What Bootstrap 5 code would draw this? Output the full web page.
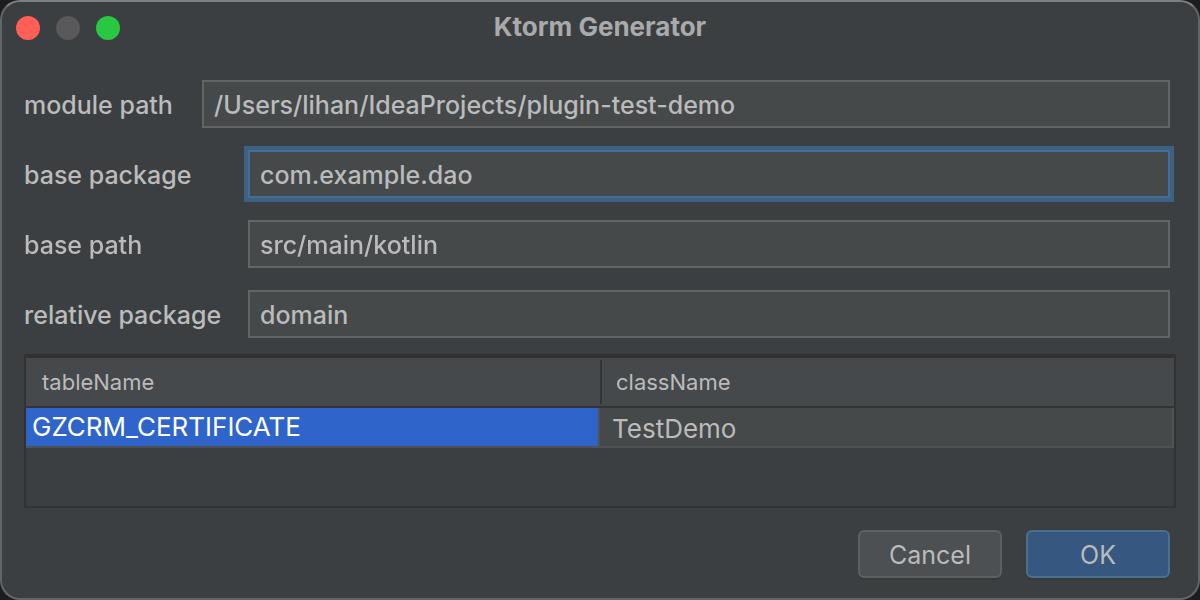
<!DOCTYPE html>
<html lang="en" data-bs-theme="dark">
<head>
<meta charset="utf-8">
<meta name="viewport" content="width=device-width, initial-scale=1">
<title>Ktorm Generator</title>
<link rel="stylesheet" href="https://cdn.jsdelivr.net/npm/bootstrap@5.3.0/dist/css/bootstrap.min.css">
<style>
  body {
    background: #1c1d1f;
    color: #bbbbbb;
    font-family: Inter, "Liberation Sans", sans-serif;
    font-size: 25px;
    font-weight: 500;
    line-height: 32px;
  }
  .dialog-window {
    background: #3c3f41;
    border: 2px solid #636668;
    border-top-color: #7e8182;
    border-radius: 20px;
  }
  .title-bar { height: 52px; padding: 0 14px; }
  .title-bar h1 { padding-bottom: 2px; font-size: 26px; line-height: 32px; font-weight: 700; color: #a9aaab; }
  .light-group { gap: 16px; flex: 1 1 0; }
  .light { width: 24px; height: 24px; border: 0; border-radius: 50%; }
  .light-close { background: #ff5f57; }
  .light-min { background: #59595b; }
  .light-zoom { background: #28c840; }

  .dialog-body { padding: 26px 22px 20px; }
  .field-list { gap: 22px; padding-right: 6px; }
  .field-label { width: 224px; padding-top: 2px; }
  .field-label-short { width: 178px; padding-top: 2px; }
  .field-box.form-control {
    width: auto;
    min-width: 0;
    height: 48px;
    padding: 2px 10px 0;
    border: 2px solid #646464;
    border-radius: 0;
    background: #45494a;
    color: #bbbbbb;
    font-size: 25px;
    font-weight: 500;
    line-height: 32px;
  }
  .field-box.form-control:focus {
    border-color: #466d94;
    box-shadow: none;
    outline: 4px solid #3d6185;
    outline-offset: 0;
  }

  .grid-frame { margin-top: 16px; border: 2px solid #323232; border-top-width: 4px; }
  .name-grid { table-layout: fixed; width: 100%; border-collapse: separate; border-spacing: 0; }
  .name-grid th {
    height: 50px;
    padding: 0 16px;
    background: #45494b;
    border-bottom: 2px solid #323537;
    font-size: 22px;
    font-weight: 400;
  }
  .name-grid th + th {
    background: linear-gradient(#323537, #323537) 0 2px / 2px 44px no-repeat #45494b;
  }
  .name-grid td {
    height: 40px;
    padding: 4px 12px 0;
    background: #45494a;
    border: solid #4f5355;
    border-width: 0 2px 2px 0;
    font-size: 26px;
    font-weight: 400;
  }
  .name-grid td.picked { padding: 0 6px; background: #2f65ca; color: #ffffff; }

  .action-row { gap: 24px; margin-top: 22px; padding-right: 6px; }
  .dialog-btn.btn {
    width: 144px;
    height: 48px;
    padding: 2px 0 0;
    border: 2px solid #5e6060;
    border-radius: 6px;
    background: #4c5052;
    color: #bbbbbb;
    font-size: 25px;
    line-height: 32px;
    box-shadow: 0 2px 0 #36393a;
  }
  .dialog-btn.btn-main { background: #365880; border-color: #4c708c; }
</style>
</head>
<body>
<main class="dialog-window d-flex flex-column min-vh-100">
  <header class="title-bar d-flex align-items-center">
    <div class="light-group d-flex">
      <button type="button" class="light light-close p-0" aria-label="Close"></button>
      <button type="button" class="light light-min p-0" aria-label="Minimize" disabled></button>
      <button type="button" class="light light-zoom p-0" aria-label="Zoom"></button>
    </div>
    <h1 class="m-0">Ktorm Generator</h1>
    <div class="light-group"></div>
  </header>

  <form class="dialog-body d-flex flex-column flex-grow-1">
    <div class="field-list d-flex flex-column">
      <div class="d-flex align-items-center">
        <label class="field-label-short flex-shrink-0" for="modulePath">module path</label>
        <input class="field-box form-control flex-grow-1" id="modulePath" type="text" value="/Users/lihan/IdeaProjects/plugin-test-demo">
      </div>
      <div class="d-flex align-items-center">
        <label class="field-label flex-shrink-0" for="basePackage">base package</label>
        <input class="field-box form-control flex-grow-1" id="basePackage" type="text" value="com.example.dao" autofocus>
      </div>
      <div class="d-flex align-items-center">
        <label class="field-label flex-shrink-0" for="basePath">base path</label>
        <input class="field-box form-control flex-grow-1" id="basePath" type="text" value="src/main/kotlin">
      </div>
      <div class="d-flex align-items-center">
        <label class="field-label flex-shrink-0" for="relativePackage">relative package</label>
        <input class="field-box form-control flex-grow-1" id="relativePackage" type="text" value="domain">
      </div>
    </div>

    <div class="grid-frame flex-grow-1">
      <table class="name-grid">
        <thead>
          <tr><th scope="col">tableName</th><th scope="col">className</th></tr>
        </thead>
        <tbody>
          <tr><td class="picked">GZCRM_CERTIFICATE</td><td>TestDemo</td></tr>
        </tbody>
      </table>
    </div>

    <div class="action-row d-flex justify-content-end">
      <button type="button" class="dialog-btn btn">Cancel</button>
      <button type="submit" class="dialog-btn btn btn-main">OK</button>
    </div>
  </form>
</main>
<script src="https://cdn.jsdelivr.net/npm/bootstrap@5.3.0/dist/js/bootstrap.bundle.min.js"></script>
</body>
</html>
